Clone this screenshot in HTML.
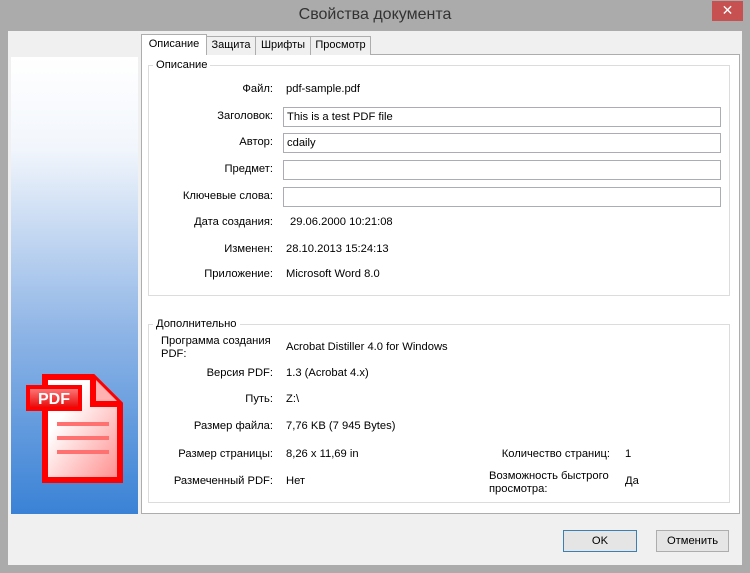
<!DOCTYPE html>
<html><head><meta charset="utf-8">
<style>
*{margin:0;padding:0;box-sizing:border-box}
body{width:750px;height:573px;background:#ababab;font-family:"Liberation Sans","DejaVu Sans",sans-serif;font-size:11.2px;color:#000;position:relative;overflow:hidden}
.a{position:absolute;white-space:nowrap}
.title{left:0;width:750px;top:6px;text-align:center;font-size:16px;color:#333}
.close{left:712px;top:1px;width:31px;height:20px;background:#c75050;color:#fff;text-align:center;font-size:14px;line-height:19px;font-weight:bold}
.client{left:8px;top:31px;width:734px;height:534px;background:#f0f0f0}
.side{left:11px;top:57px;width:127px;height:457px;background:linear-gradient(#fff 0%,#f2f6fc 20%,#8fb5e6 60%,#3a82d6 100%)}
.panel{left:141px;top:54px;width:599px;height:460px;background:#fff;border:1px solid #adadad}
.tab{top:36px;height:19px;border:1px solid #adadad;border-bottom:none;background:#f0f0f0;text-align:center;line-height:17px;font-size:11px}
.tab.on{top:34px;height:21px;background:#fff;line-height:19px;z-index:2}
.grp{border:1px solid #dcdcdc}
.gl{background:#fff;padding:0 3px}
.lbl{text-align:right;width:200px}
.inp{left:283px;width:438px;height:20px;border:1px solid #abadb3;background:#fff;padding-left:3px;line-height:18px}
.btn{top:530px;height:22px;border:1px solid #adadad;background:#e5e5e5;text-align:center;line-height:20px}
</style></head><body>
<div class="a title">Свойства документа</div>
<div class="a close">✕</div>
<div class="a client"></div>
<div class="a side"></div>
<svg class="a" style="left:20px;top:370px" width="110" height="120" viewBox="20 370 110 120">
<defs><linearGradient id="g" x1="0" y1="0" x2="1" y2="1"><stop offset="0.3" stop-color="#fff"/><stop offset="1" stop-color="#ff8a8a"/></linearGradient>
<linearGradient id="g2" x1="0" y1="0" x2="0" y2="1"><stop offset="0" stop-color="#ff8080"/><stop offset="1" stop-color="#e80000"/></linearGradient></defs>
<path d="M45 377 H93 L120 404 V480 H45 Z" fill="url(#g)" stroke="#f00" stroke-width="6"/>
<path d="M93 377 V404 H120" fill="#ffb0b0" stroke="#f00" stroke-width="6"/>
<rect x="57" y="422" width="52" height="4" fill="#ff7070"/>
<rect x="57" y="436" width="52" height="4" fill="#ff7070"/>
<rect x="57" y="450" width="52" height="4" fill="#ff7070"/>
<rect x="28" y="387" width="52" height="22" fill="url(#g2)" stroke="#f00" stroke-width="4"/>
<text x="54" y="404" text-anchor="middle" font-family="Liberation Sans" font-weight="bold" font-size="16" fill="#fff">PDF</text>
</svg>
<div class="a panel"></div>
<div class="a tab on" style="left:141px;width:66px">Описание</div>
<div class="a tab" style="left:206px;width:50px">Защита</div>
<div class="a tab" style="left:255px;width:56px">Шрифты</div>
<div class="a tab" style="left:310px;width:61px">Просмотр</div>

<div class="a grp" style="left:148px;top:65px;width:582px;height:231px"></div>
<div class="a gl" style="left:153px;top:59px">Описание</div>
<div class="a lbl" style="left:73px;top:83px">Файл:</div><div class="a" style="left:286px;top:83px">pdf-sample.pdf</div>
<div class="a lbl" style="left:73px;top:110px">Заголовок:</div><div class="a inp" style="top:107px">This is a test PDF file</div>
<div class="a lbl" style="left:73px;top:136px">Автор:</div><div class="a inp" style="top:133px">cdaily</div>
<div class="a lbl" style="left:73px;top:163px">Предмет:</div><div class="a inp" style="top:160px"></div>
<div class="a lbl" style="left:73px;top:190px">Ключевые слова:</div><div class="a inp" style="top:187px"></div>
<div class="a lbl" style="left:73px;top:216px">Дата создания:</div><div class="a" style="left:290px;top:216px">29.06.2000 10:21:08</div>
<div class="a lbl" style="left:73px;top:243px">Изменен:</div><div class="a" style="left:286px;top:243px">28.10.2013 15:24:13</div>
<div class="a lbl" style="left:73px;top:268px">Приложение:</div><div class="a" style="left:286px;top:268px">Microsoft Word 8.0</div>

<div class="a grp" style="left:148px;top:324px;width:582px;height:179px"></div>
<div class="a gl" style="left:153px;top:318px">Дополнительно</div>
<div class="a" style="left:161px;top:335px;line-height:13px">Программа создания<br>PDF:</div><div class="a" style="left:286px;top:341px">Acrobat Distiller 4.0 for Windows</div>
<div class="a lbl" style="left:73px;top:367px">Версия PDF:</div><div class="a" style="left:286px;top:367px">1.3 (Acrobat 4.x)</div>
<div class="a lbl" style="left:73px;top:393px">Путь:</div><div class="a" style="left:286px;top:393px">Z:\</div>
<div class="a lbl" style="left:73px;top:420px">Размер файла:</div><div class="a" style="left:286px;top:420px">7,76 KB (7 945 Bytes)</div>
<div class="a lbl" style="left:73px;top:448px">Размер страницы:</div><div class="a" style="left:286px;top:448px">8,26 x 11,69 in</div>
<div class="a lbl" style="left:73px;top:475px">Размеченный PDF:</div><div class="a" style="left:286px;top:475px">Нет</div>
<div class="a lbl" style="left:410px;top:448px">Количество страниц:</div><div class="a" style="left:625px;top:448px">1</div>
<div class="a" style="left:489px;top:470px;line-height:13px">Возможность быстрого<br>просмотра:</div><div class="a" style="left:625px;top:475px">Да</div>

<div class="a btn" style="left:563px;width:74px;border-color:#3c7fb1">OK</div>
<div class="a btn" style="left:656px;width:73px">Отменить</div>
</body></html>
